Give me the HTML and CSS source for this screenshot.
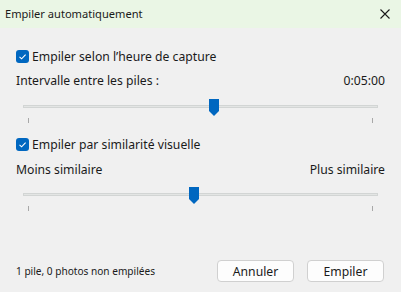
FILE: index.html
```html
<!DOCTYPE html>
<html lang="fr">
<head>
<meta charset="utf-8">
<title>Empiler automatiquement</title>
<link rel="stylesheet" href="styles.css">
</head>
<body>
<div class="window">
  <div class="titlebar">
    <span class="title">Empiler automatiquement</span>
    <svg class="close" width="10" height="10" viewBox="0 0 10 10"><path d="M0.5 0.5 L9.5 9.5 M9.5 0.5 L0.5 9.5" stroke="#1a1a1a" stroke-width="1.1" fill="none"/></svg>
  </div>
  <div class="content">
    <label class="check-row first">
      <span class="checkbox"><svg width="13" height="13" viewBox="0 0 13 13"><path d="M3.5 6.8 L5.6 8.8 L9.6 4.6" stroke="#fff" stroke-width="1.1" fill="none"/></svg></span>
      <span>Empiler selon l’heure de capture</span>
    </label>
    <div class="label-row gap1">
      <span>Intervalle entre les piles :</span>
      <span>0:05:00</span>
    </div>
    <div class="slider s1" style="--pos:0.539">
      <div class="track"></div>
      <svg class="thumb" width="10" height="17" viewBox="0 0 10 17"><path d="M0 0 H10 V12 L5 17 L0 12 Z" fill="#0067c0"/></svg>
    </div>
    <div class="ticks"><span class="tick"></span><span class="tick"></span></div>

    <label class="check-row second">
      <span class="checkbox"><svg width="13" height="13" viewBox="0 0 13 13"><path d="M3.5 6.8 L5.6 8.8 L9.6 4.6" stroke="#fff" stroke-width="1.1" fill="none"/></svg></span>
      <span>Empiler par similarité visuelle</span>
    </label>
    <div class="label-row gap2">
      <span>Moins similaire</span>
      <span>Plus similaire</span>
    </div>
    <div class="slider s2" style="--pos:0.481">
      <div class="track"></div>
      <svg class="thumb" width="10" height="17" viewBox="0 0 10 17"><path d="M0 0 H10 V12 L5 17 L0 12 Z" fill="#0067c0"/></svg>
    </div>
    <div class="ticks"><span class="tick"></span><span class="tick"></span></div>

    <div class="footer">
      <span class="status">1 pile, 0 photos non empilées</span>
      <div class="buttons">
        <button class="btn">Annuler</button>
        <button class="btn">Empiler</button>
      </div>
    </div>
  </div>
</div>
</body>
</html>
```

FILE: styles.css
```css
html, body {
  margin: 0;
  padding: 0;
}
body {
  background: #f0f0f0;
  font-family: "Noto Sans", "Liberation Sans", sans-serif;
  color: #1a1a1a;
  width: 401px;
  height: 292px;
  overflow: hidden;
}
.window {
  width: 401px;
  height: 292px;
}
.titlebar {
  height: 28px;
  background: #eaf6e5;
  display: flex;
  align-items: center;
  justify-content: space-between;
  padding: 0 11px 0 5px;
  font-size: 11.1px;
}
.title {
  line-height: 16px;
}
.close {
  display: block;
}
.content {
  padding: 0 16px;
}
.check-row {
  display: flex;
  align-items: center;
  height: 16px;
  gap: 3px;
  font-size: 12.2px;
}
.check-row.first {
  margin-top: 20px;
}
.check-row.second {
  margin-top: 13px;
}
.checkbox {
  width: 13px;
  height: 13px;
  border-radius: 3px;
  background: #0067c0;
  display: block;
}
.checkbox svg {
  display: block;
}
.label-row {
  display: flex;
  justify-content: space-between;
  align-items: center;
  height: 16px;
  font-size: 12.2px;
}
.label-row.gap1 {
  margin-top: 8px;
}
.label-row.gap2 {
  margin-top: 9px;
}
.slider {
  position: relative;
  height: 18px;
  margin: 0 7px;
  padding-top: 7px;
  box-sizing: border-box;
}
.slider.s1 {
  margin-top: 10px;
}
.slider.s2 {
  margin-top: 9px;
}
.track {
  height: 3px;
  background: #e3e5e4;
  border: 1px solid #d2d5d4;
  box-sizing: border-box;
}
.thumb {
  position: absolute;
  top: 1px;
  left: calc((100% - 10px) * var(--pos));
  display: block;
}
.ticks {
  display: flex;
  justify-content: space-between;
  margin: 2px 12px 0;
  height: 5px;
}
.tick {
  width: 1px;
  height: 5px;
  background: #a8a8a8;
}
.footer {
  margin-top: 49px;
  display: flex;
  justify-content: space-between;
  align-items: center;
  padding-right: 1px;
}
.status {
  font-size: 10.1px;
}
.buttons {
  display: flex;
  gap: 13px;
}
.btn {
  width: 77px;
  height: 22px;
  padding: 0;
  background: #fdfdfd;
  border: 1px solid #d0d0d0;
  border-radius: 4px;
  font-family: "Noto Sans", "Liberation Sans", sans-serif;
  font-size: 12.2px;
  color: #1a1a1a;
}
```
